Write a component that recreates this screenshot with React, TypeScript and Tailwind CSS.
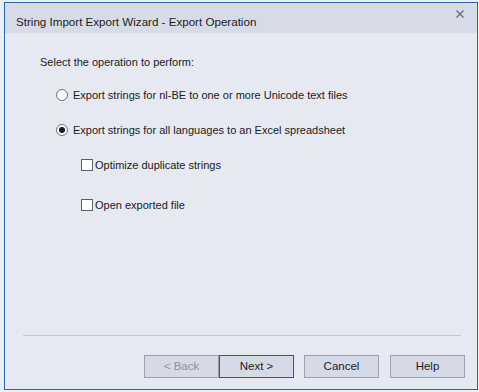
import React from "react";

const font = { fontFamily: '"Liberation Sans", Arial, sans-serif' };

function Radio({ checked }: { checked?: boolean }) {
  return (
    <span className="relative inline-flex h-[12px] w-[12px] shrink-0 items-center justify-center rounded-full border border-[#6f7278] bg-white">
      {checked && <span className="h-[6px] w-[6px] rounded-full bg-[#1b1b1b]" />}
    </span>
  );
}

function Check() {
  return <span className="inline-block h-[12px] w-[12px] shrink-0 border border-[#5f6368] bg-white" />;
}

function Btn({ label, disabled, primary }: { label: string; disabled?: boolean; primary?: boolean }) {
  return (
    <button
      className={
        "h-[23px] w-[75px] bg-[#d6dae6] text-[11.5px] leading-none " +
        (primary ? "border border-[#1f5f9f] " : "border border-[#9ba1ae] ") +
        (disabled ? "text-[#8e9199]" : "text-[#1b1b1b]")
      }
    >
      {label}
    </button>
  );
}

export default function App() {
  return (
    <div className="h-[392px] w-[479px] overflow-hidden bg-[#eceef3]" style={font}>
      <div className="ml-[4px] mt-[2px] flex h-[388px] w-[474px] flex-col border border-[#2766ad] bg-[#e6e8f2]">
        {/* title bar */}
        <div className="flex h-[30px] shrink-0 items-start justify-between bg-[#d6dbe7]">
          <span className="ml-[11px] mt-[11px] text-[11.6px] leading-[16px] text-[#1b1b1b]">
            String Import Export Wizard - Export Operation
          </span>
          <svg className="mr-[13px] mt-[7px]" width="8" height="8" viewBox="0 0 8 8">
            <path d="M0.5 0.5 L7.5 7.5 M7.5 0.5 L0.5 7.5" stroke="#6b6e74" strokeWidth="1.4" />
          </svg>
        </div>

        {/* body */}
        <div className="flex flex-1 flex-col text-[11px] leading-[16px] text-[#1b1b1b]">
          <div className="ml-[35px] mt-[21px] h-[16px]">Select the operation to perform:</div>

          <div className="ml-[51px] mt-[17px] flex h-[16px] items-center gap-[5px]">
            <Radio />
            <span>Export strings for nl-BE to one or more Unicode text files</span>
          </div>

          <div className="ml-[51px] mt-[19px] flex h-[16px] items-center gap-[5px]">
            <Radio checked />
            <span>Export strings for all languages to an Excel spreadsheet</span>
          </div>

          <div className="ml-[76px] mt-[19px] flex h-[16px] items-center gap-[2px]">
            <Check />
            <span>Optimize duplicate strings</span>
          </div>

          <div className="ml-[76px] mt-[24px] flex h-[16px] items-center gap-[2px]">
            <Check />
            <span>Open exported file</span>
          </div>

          <div className="flex-1" />

          <div className="ml-[18px] h-px w-[438px] bg-[#c4c7d0]" />

          <div className="mb-[11px] mr-[12px] mt-[19px] flex justify-end">
            <Btn label="< Back" disabled />
            <Btn label="Next >" primary />
            <div className="w-[10px]" />
            <Btn label="Cancel" />
            <div className="w-[11px]" />
            <Btn label="Help" />
          </div>
        </div>
      </div>
    </div>
  );
}
